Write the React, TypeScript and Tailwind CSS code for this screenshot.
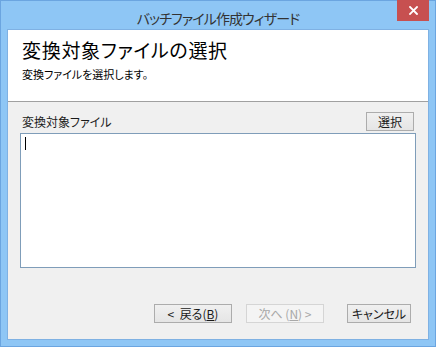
import React from "react";

const font = "font-['Noto_Sans_CJK_JP','Noto_Sans_CJK_SC',sans-serif] [font-feature-settings:'palt']";

function Btn({ children, w, disabled }: { children: React.ReactNode; w: string; disabled?: boolean }) {
  return (
    <div
      className={`${w} h-[19px] flex items-center justify-center text-[12px] leading-[12px] border ${
        disabled
          ? "border-[#d5d5d5] bg-[#f4f4f4] text-[#a8a8a8]"
          : "border-[#acacac] bg-gradient-to-b from-[#f0f0f0] to-[#e5e5e5] text-[#1a1a1a]"
      }`}
    >
      {children}
    </div>
  );
}

export default function App() {
  return (
    <div className={`w-[436px] h-[347px] bg-[#8ec6f5] border border-[#6ba5e0] flex flex-col ${font}`}>
      <div className="relative h-[28px] flex justify-center pt-[10px]">
        <span className="text-[14px] leading-[14px] tracking-[-0.9px] text-[#333333]">バッチファイル作成ウィザード</span>
        <div className="absolute right-[6px] top-[-1px] w-[32px] h-[21px] bg-[#c75050] flex items-center justify-center">
          <svg width="9" height="9" viewBox="0 0 9 9">
            <path d="M1 1 L8 8 M8 1 L1 8" stroke="white" strokeWidth="1.8" strokeLinecap="square" />
          </svg>
        </div>
      </div>
      <div className="mx-[6px] mb-[6px] flex-1 bg-[#f0f0f0] border border-[#7fb1e3] flex flex-col">
        <div className="h-[72px] bg-white border-b border-[#a0a0a0] pl-[14px] pt-[10px] flex flex-col">
          <div className="text-[19px] leading-[20px] tracking-[0.7px] text-black">変換対象ファイルの選択</div>
          <div className="mt-[9px] text-[11px] leading-[11px] text-black">変換ファイルを選択します。</div>
        </div>
        <div className="px-[12px] pt-[10px] flex flex-col">
          <div className="h-[19px] flex items-center justify-between px-[2px]">
            <span className="text-[12px] leading-[12px] text-[#1a1a1a]">変換対象ファイル</span>
            <Btn w="w-[48px]">選択</Btn>
          </div>
          <div className="mt-[2px] h-[135px] bg-white border border-[#7f9db9] pl-[4px] pt-[3px]">
            <div className="w-[1px] h-[13px] bg-black" />
          </div>
        </div>
        <div className="mt-[36px] flex justify-end pr-[17px]">
          <Btn w="w-[78px]">
            <span>&lt;&nbsp; 戻る(<span className="underline">B</span>)</span>
          </Btn>
          <div className="w-[14px]" />
          <Btn w="w-[78px]" disabled>
            <span>次へ (<span className="underline">N</span>) &gt;</span>
          </Btn>
          <div className="w-[23px]" />
          <Btn w="w-[64px]">キャンセル</Btn>
        </div>
      </div>
    </div>
  );
}
